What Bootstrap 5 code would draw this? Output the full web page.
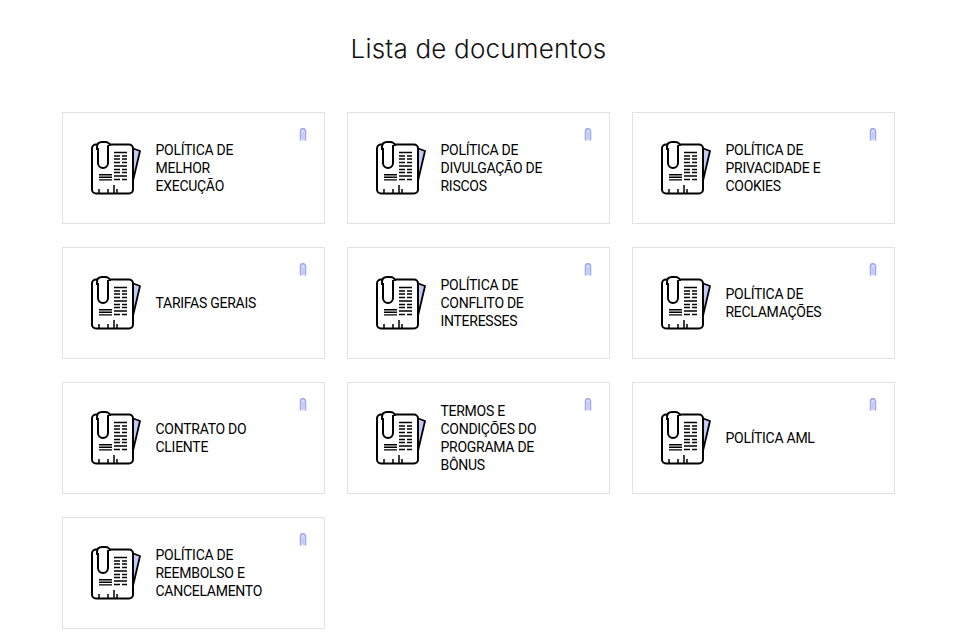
<!DOCTYPE html>
<html lang="pt">
<head>
<meta charset="utf-8">
<title>Lista de documentos</title>
<link href="https://cdn.jsdelivr.net/npm/bootstrap@5.3.0/dist/css/bootstrap.min.css" rel="stylesheet">
<style>
body{font-family:Roboto,"Liberation Sans",sans-serif;color:#000;background:#fff;overflow:hidden}
.page-wrap{width:833px;margin-left:62px;padding-top:33px}
.page-heading{font-family:Inter,Roboto,sans-serif;font-weight:300;font-size:26px;letter-spacing:.2px;line-height:32px;text-align:center;color:#111;margin:0 0 47px 0;width:833px}
.doc-row{--bs-gutter-x:22px;--bs-gutter-y:23px}
.doc-card{position:relative;height:112px;border:1px solid #e2e2e2;padding-left:28px;background:#fff}
.doc-label{font-size:14px;letter-spacing:-.27px;line-height:18px;width:120px;margin-left:14.500px;text-transform:uppercase;color:#000}
.doc-clip{position:absolute;top:15px;right:17px;width:8px;height:13px}
.doc-icon{width:50px;height:54px;flex:none}
</style>
</head>
<body>
<svg width="0" height="0" class="position-absolute">
<defs>
<symbol id="doc-ico" viewBox="0 0 50 54">
<path d="M41 7 49 10 41 44Z" fill="#c3c9f5" stroke="#000" stroke-width="1.800" stroke-linejoin="round"/>
<rect x="1" y="3.500" width="41" height="49" rx="4" fill="#fff" stroke="#000" stroke-width="2"/>
<path d="M6 9V6C6 3 8 1 11 1H14C17 1 19 3 19 5" fill="#fff" stroke="#000" stroke-width="2"/>
<path d="M7 7V22a5 5 0 0 0 10 0V4" fill="#fff" stroke="#000" stroke-width="2"/>
<path d="M23 11.500H36M23 15H29M31 15H36M23 18H29M31 18H36M23 21.500H29M31 21.500H36M23 25H36M23 28.500H29M31 28.500H36M23 31.500H29M31 31.500H36M23 35H36M23 38.500H29M31 38.500H36" stroke="#000" stroke-width="1.600" fill="none"/>
<path d="M8 33.700H21M8 36.300H21M8 38.900H21" stroke="#000" stroke-width="1.400" fill="none"/>
<path d="M8 52V48M17 52V48M23 52V44M26 52V48" stroke="#000" stroke-width="1.500" fill="none"/>
</symbol>
<symbol id="clip-ico" viewBox="0 0 8 13">
<path d="M1.500 12.500V3.200a2.500 2.500 0 0 1 5 0V12.500" fill="#dfe2fb" stroke="#9ea8f0" stroke-width="1.500"/>
<path d="M4 11.500V4" fill="none" stroke="#9ea8f0" stroke-width=".8"/>
</symbol>
</defs>
</svg>
<main class="page-wrap">
<h1 class="page-heading">Lista de documentos</h1>
<div class="row doc-row">
<div class="col-4"><div class="doc-card d-flex align-items-center"><svg class="doc-icon"><use href="#doc-ico"/></svg><div class="doc-label">Política de melhor execução</div><svg class="doc-clip"><use href="#clip-ico"/></svg></div></div>
<div class="col-4"><div class="doc-card d-flex align-items-center"><svg class="doc-icon"><use href="#doc-ico"/></svg><div class="doc-label">Política de divulgação de riscos</div><svg class="doc-clip"><use href="#clip-ico"/></svg></div></div>
<div class="col-4"><div class="doc-card d-flex align-items-center"><svg class="doc-icon"><use href="#doc-ico"/></svg><div class="doc-label">Política de privacidade e cookies</div><svg class="doc-clip"><use href="#clip-ico"/></svg></div></div>
<div class="col-4"><div class="doc-card d-flex align-items-center"><svg class="doc-icon"><use href="#doc-ico"/></svg><div class="doc-label">Tarifas gerais</div><svg class="doc-clip"><use href="#clip-ico"/></svg></div></div>
<div class="col-4"><div class="doc-card d-flex align-items-center"><svg class="doc-icon"><use href="#doc-ico"/></svg><div class="doc-label">Política de conflito de interesses</div><svg class="doc-clip"><use href="#clip-ico"/></svg></div></div>
<div class="col-4"><div class="doc-card d-flex align-items-center"><svg class="doc-icon"><use href="#doc-ico"/></svg><div class="doc-label">Política de reclamações</div><svg class="doc-clip"><use href="#clip-ico"/></svg></div></div>
<div class="col-4"><div class="doc-card d-flex align-items-center"><svg class="doc-icon"><use href="#doc-ico"/></svg><div class="doc-label">Contrato do cliente</div><svg class="doc-clip"><use href="#clip-ico"/></svg></div></div>
<div class="col-4"><div class="doc-card d-flex align-items-center"><svg class="doc-icon"><use href="#doc-ico"/></svg><div class="doc-label">Termos e condições do programa de bônus</div><svg class="doc-clip"><use href="#clip-ico"/></svg></div></div>
<div class="col-4"><div class="doc-card d-flex align-items-center"><svg class="doc-icon"><use href="#doc-ico"/></svg><div class="doc-label">Política AML</div><svg class="doc-clip"><use href="#clip-ico"/></svg></div></div>
<div class="col-4"><div class="doc-card d-flex align-items-center"><svg class="doc-icon"><use href="#doc-ico"/></svg><div class="doc-label">Política de reembolso e cancelamento</div><svg class="doc-clip"><use href="#clip-ico"/></svg></div></div>
</div>
</main>
</body>
</html>
